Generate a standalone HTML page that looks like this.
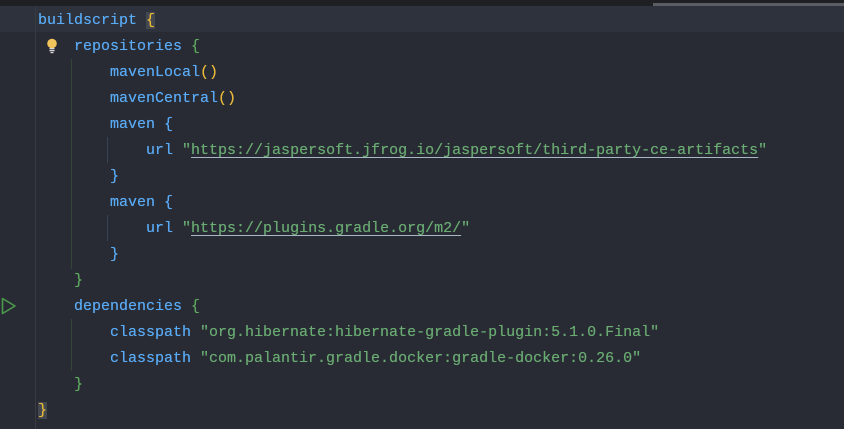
<!DOCTYPE html>
<html><head><meta charset="utf-8"><style>
html,body{margin:0;padding:0;}
body{width:844px;height:429px;background:#2b2d30;position:relative;overflow:hidden;font-family:"Liberation Mono",monospace;font-size:15px;}
#top{position:absolute;left:0;top:0;width:844px;height:6px;background:#1f2023;}
#sb{position:absolute;left:653px;top:3px;width:191px;height:4px;background:#5b5d63;}
#ed{position:absolute;left:0;top:6px;width:844px;height:423px;background:#282b33;}
#cur{position:absolute;left:0;top:6px;width:844px;height:26px;background:#2e323c;}
#gut{position:absolute;left:35px;top:6px;width:1px;height:423px;background:#393b40;}
.l{position:absolute;left:38px;height:26px;line-height:26px;white-space:pre;color:#5aabf7;margin-top:2px;text-shadow:0 0 0.4px currentColor;}
.s{color:#6aab73}.y{color:#e8b93a}.g{color:#5fa85f}.b{color:#56a8f5}
.u{color:#6aab73;text-decoration:underline;text-decoration-color:#a9b7c6;text-underline-offset:3px}
.hl{background:#43474f}
.guide{position:absolute;width:1px;background:#3a4a3a;}
</style></head><body>
<div id="top"></div><div id="sb"></div>
<div id="ed"></div><div id="cur"></div><div id="gut"></div>
<div class="guide" style="left:71px;top:59px;height:210px;background:#34463a"></div>
<div class="guide" style="left:107px;top:137px;height:26px;background:#354558"></div>
<div class="guide" style="left:107px;top:215px;height:26px;background:#354558"></div>
<div class="guide" style="left:71px;top:319px;height:52px;background:#34463a"></div>
<svg style="position:absolute;left:46px;top:38px" width="12" height="16" viewBox="0 0 12 16"><circle cx="6" cy="5.5" r="4.8" fill="#f2c55c"/><rect x="3.5" y="10" width="5" height="1.3" fill="#d8d8d8"/><rect x="3.5" y="12" width="5" height="1.3" fill="#d8d8d8"/><rect x="4.5" y="14" width="3" height="1.2" fill="#d8d8d8"/></svg>
<svg style="position:absolute;left:1px;top:297px" width="16" height="18" viewBox="0 0 16 18"><path d="M1.5 1.5 L14 9 L1.5 16.5 Z" fill="none" stroke="#4c9a4c" stroke-width="1.6" stroke-linejoin="round"/></svg>
<div class="l" style="top:6px">buildscript <span class="y hl">{</span></div>
<div class="l" style="top:32px">    repositories <span class="g">{</span></div>
<div class="l" style="top:58px">        mavenLocal<span class="y">()</span></div>
<div class="l" style="top:84px">        mavenCentral<span class="y">()</span></div>
<div class="l" style="top:110px">        maven {</div>
<div class="l" style="top:136px">            url <span class="s">"</span><span class="u">https://jaspersoft.jfrog.io/jaspersoft/third-party-ce-artifacts</span><span class="s">"</span></div>
<div class="l" style="top:162px">        }</div>
<div class="l" style="top:188px">        maven {</div>
<div class="l" style="top:214px">            url <span class="s">"</span><span class="u">https://plugins.gradle.org/m2/</span><span class="s">"</span></div>
<div class="l" style="top:240px">        }</div>
<div class="l" style="top:266px">    <span class="g">}</span></div>
<div class="l" style="top:292px">    dependencies <span class="g">{</span></div>
<div class="l" style="top:318px">        classpath <span class="s">"org.hibernate:hibernate-gradle-plugin:5.1.0.Final"</span></div>
<div class="l" style="top:344px">        classpath <span class="s">"com.palantir.gradle.docker:gradle-docker:0.26.0"</span></div>
<div class="l" style="top:370px">    <span class="g">}</span></div>
<div class="l" style="top:396px"><span class="y hl">}</span></div>
</body></html>
